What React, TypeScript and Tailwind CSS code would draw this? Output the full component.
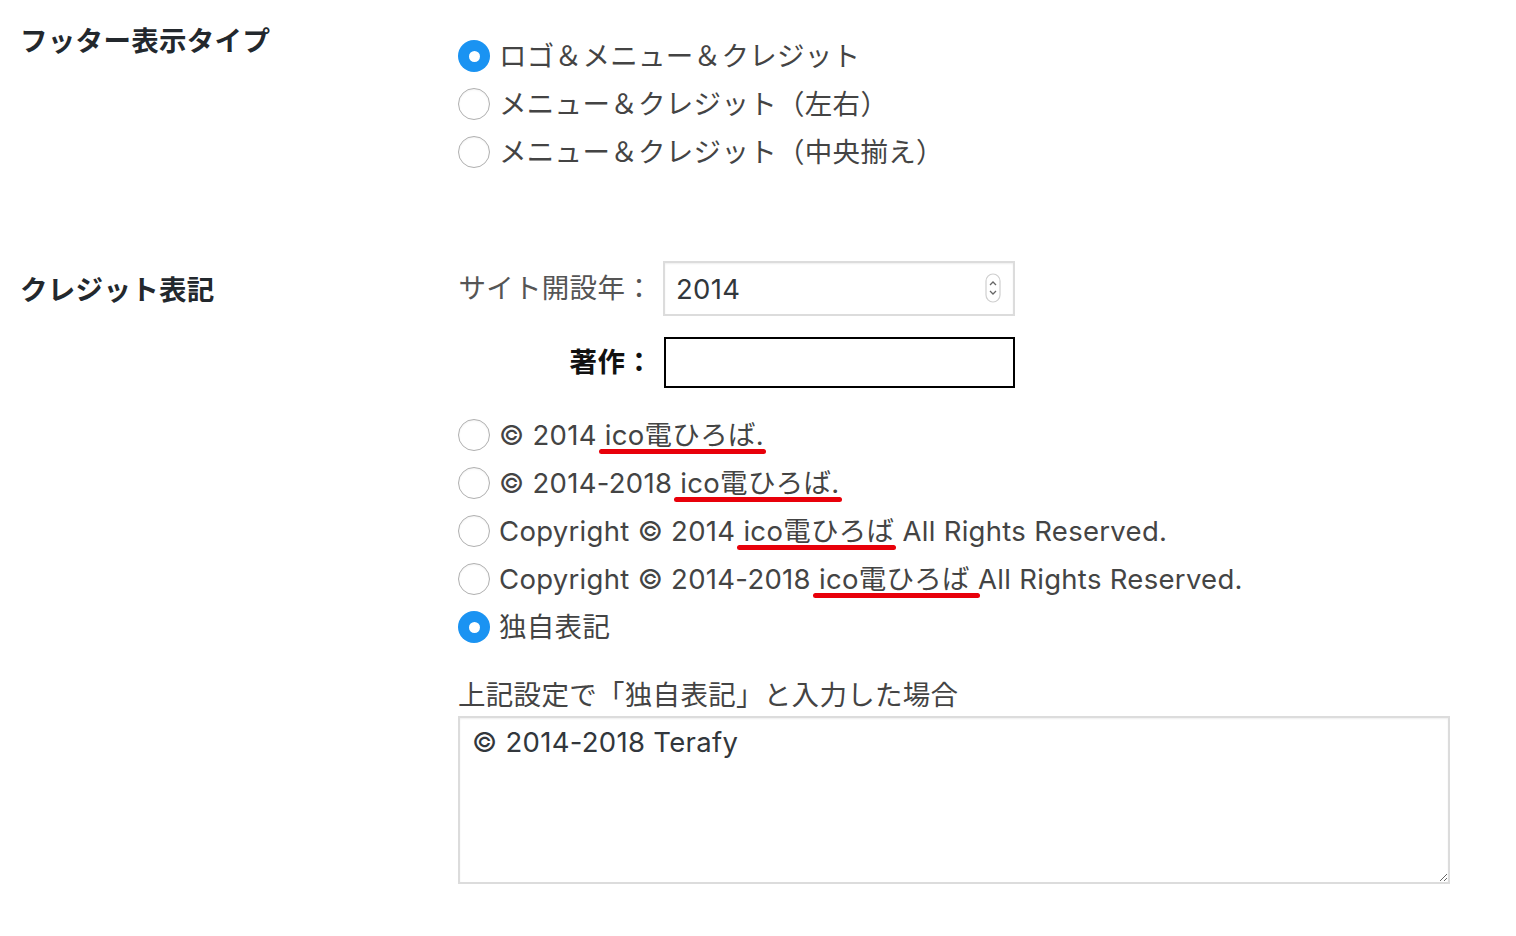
import React from "react";

const font = "font-['Inter','Noto_Sans_CJK_JP',sans-serif]";

function Radio({ checked }: { checked?: boolean }) {
  if (checked) {
    return (
      <span className="flex h-[32px] w-[32px] shrink-0 items-center justify-center rounded-full bg-[#1a93f2]">
        <span className="h-[11px] w-[11px] rounded-full bg-white" />
      </span>
    );
  }
  return (
    <span className="h-[32px] w-[32px] shrink-0 rounded-full border-[1.5px] border-[#b0b0b0] bg-white shadow-[inset_0_1px_2px_rgba(0,0,0,0.06)]" />
  );
}

function Marked({ children }: { children: React.ReactNode }) {
  return (
    <span className="relative inline-block">
      {children}
      <span className="absolute bottom-[5px] left-[2px] right-[-2px] h-[5px] rounded-full bg-[#e8000a]" />
    </span>
  );
}

function Option({ checked, children }: { checked?: boolean; children: React.ReactNode }) {
  return (
    <div className="flex h-[48px] items-center gap-[9px]">
      <Radio checked={checked} />
      <span className="whitespace-pre leading-[48px] text-[#444]">{children}</span>
    </div>
  );
}

function Spinner() {
  return (
    <svg width="16" height="30" viewBox="0 0 16 30" className="absolute right-[14px] top-[12px]">
      <rect x="1" y="1" width="14" height="28" rx="7" fill="#fff" stroke="#cfcfcf" strokeWidth="1.2" />
      <path d="M5 12 L8 9 L11 12" fill="none" stroke="#666" strokeWidth="1.3" />
      <path d="M5 18 L8 21 L11 18" fill="none" stroke="#666" strokeWidth="1.3" />
    </svg>
  );
}

export default function App() {
  return (
    <div className={`min-h-screen bg-white pl-[20px] pt-[21px] text-[27.5px] tracking-[0.3px] ${font}`}>
      {/* フッター表示タイプ */}
      <div className="grid grid-cols-[438px_1fr]">
        <div className="font-bold leading-[40px] text-[#23282d]">フッター表示タイプ</div>
        <div className="pt-[11px]">
          <Option checked>ロゴ＆メニュー＆クレジット</Option>
          <Option>メニュー＆クレジット（左右）</Option>
          <Option>メニュー＆クレジット（中央揃え）</Option>
        </div>
      </div>

      {/* クレジット表記 */}
      <div className="mt-[85px] grid grid-cols-[438px_1fr]">
        <div className="pt-[9px] font-bold leading-[40px] text-[#23282d]">クレジット表記</div>
        <div>
          <div className="flex h-[55px] items-center gap-[10px]">
            <span className="w-[195px] shrink-0 whitespace-nowrap text-right text-[#555]">サイト開設年：</span>
            <div className="relative h-[55px] w-[352px]">
              <input
                readOnly
                value="2014"
                className={`h-full w-full border-2 border-[#dcdcdc] bg-white pl-[11px] text-[27.5px] text-[#32373c] shadow-[inset_0_1px_2px_rgba(0,0,0,0.07)] outline-none ${font}`}
              />
              <Spinner />
            </div>
          </div>
          <div className="mt-[21px] flex h-[51px] items-center gap-[11px]">
            <span className="w-[195px] shrink-0 whitespace-nowrap text-right font-bold text-[#111]">著作：</span>
            <input readOnly value="" className="h-[51px] w-[351px] border-2 border-black bg-white outline-none" />
          </div>

          <div className="mt-[23px]">
            <Option>
              © 2014<Marked> ico電ひろば.</Marked>
            </Option>
            <Option>
              © 2014-2018<Marked> ico電ひろば.</Marked>
            </Option>
            <Option>
              Copyright © 2014<Marked> ico電ひろば</Marked> All Rights Reserved.
            </Option>
            <Option>
              Copyright © 2014-2018<Marked> ico電ひろば </Marked>All Rights Reserved.
            </Option>
            <Option checked>独自表記</Option>
          </div>

          <div className="mt-[24px] leading-[40px] text-[#444]">上記設定で「独自表記」と入力した場合</div>
          <textarea
            readOnly
            defaultValue="© 2014-2018 Terafy"
            className={`mt-[1px] block h-[168px] w-[992px] border-2 border-[#dcdcdc] bg-white px-[12px] pt-[4px] text-[27.5px] leading-[40px] tracking-[0.3px] text-[#32373c] shadow-[inset_0_1px_2px_rgba(0,0,0,0.07)] outline-none ${font}`}
          />
        </div>
      </div>
    </div>
  );
}
